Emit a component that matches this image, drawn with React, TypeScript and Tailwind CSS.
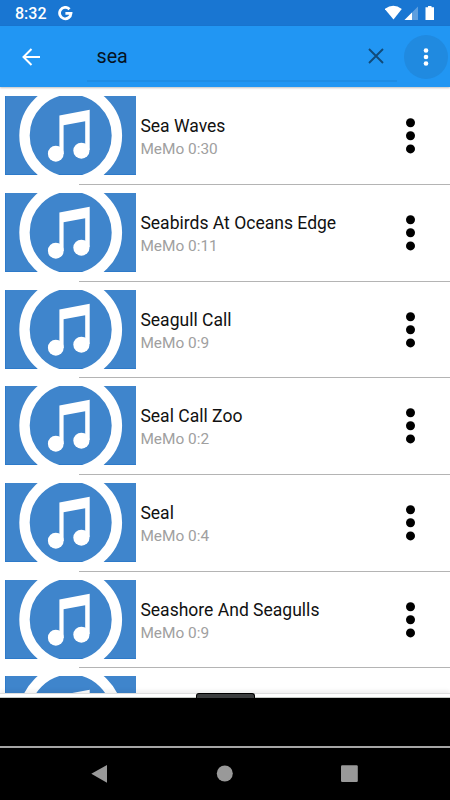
type Track = { title: string; artist: string; length: string };

const TRACKS: Track[] = [
  { title: "Sea Waves", artist: "MeMo", length: "0:30" },
  { title: "Seabirds At Oceans Edge", artist: "MeMo", length: "0:11" },
  { title: "Seagull Call", artist: "MeMo", length: "0:9" },
  { title: "Seal Call Zoo", artist: "MeMo", length: "0:2" },
  { title: "Seal", artist: "MeMo", length: "0:4" },
  { title: "Seashore And Seagulls", artist: "MeMo", length: "0:9" },
];

export default function App() {
  return (
    <div className="flex h-[800px] w-[450px] flex-col overflow-hidden bg-white font-[Roboto,sans-serif]">
      <StatusBar />
      <SearchBar query="sea" />
      <main className="h-[606px] shrink-0 overflow-hidden pt-[1.300px]">
        {TRACKS.map((t) => <TrackRow key={t.title} track={t} />)}
        <div className="pt-[8px] pl-[4.6px]"><Artwork /></div>
      </main>
      <PlayerPanel />
      <NavBar />
    </div>
  );
}

function StatusBar() {
  return (
    <div className="flex h-[26px] shrink-0 items-center bg-[#1976d2] pl-[15px] text-white">
      <span className="w-[43px] pt-[2px] text-[16px] leading-[24px] font-medium">8:32</span>
      <svg width="15" height="15" viewBox="0 0 15 15" fill="none" stroke="white" strokeWidth="2.8">
        <path d="M11.5 3.2A5.7 5.7 0 1 0 13 7.4H7.4" />
      </svg>
      <svg className="ml-auto" width="65" height="26" viewBox="385 0 65 26" fill="white">
        <path d="M384.8 9q8.5-6.6 17 0L393.500 19.400z" />
        <path d="M418 6.500V20h-13.500z" fillOpacity=".3" />
        <path d="M412 12.500V20h-7.500z" />
        <path d="M428 6h3.500v1.200H434V20h-8.500V7.200h2.500z" />
      </svg>
    </div>
  );
}

function SearchBar({ query }: { query: string }) {
  return (
    <header className="relative z-10 flex h-[61px] shrink-0 items-center bg-[#2196f3] shadow-[0_1px_2px_rgba(0,0,0,0.25)]">
      <svg className="ml-[21px]" width="20" height="20" viewBox="0 0 20 20" fill="none" stroke="white" strokeWidth="2">
        <path d="M19 10H2.500M10.500 2L2.500 10l8 8" />
      </svg>
      <div className="ml-[46px] flex h-[56px] w-[310px] items-center self-start border-b-2 border-[#1f8de5] pl-[9.500px]">
        <span className="pt-[8px] text-[19.700px] text-[#06131f]">{query}</span>
        <svg className="mt-[6px] mr-[13px] ml-auto" width="16" height="16" viewBox="0 0 16 16" fill="none" stroke="#114a79" strokeWidth="1.900">
          <path d="M1 1l14 14M15 1L1 15" />
        </svg>
      </div>
      <div className="ml-[7px] flex size-[44px] shrink-0 items-center justify-center rounded-full bg-[#208ae0]">
        <svg width="6" height="20" viewBox="0 0 6 20" fill="white">
          <circle cx="3" cy="3.500" r="2.300" />
          <circle cx="3" cy="10" r="2.300" />
          <circle cx="3" cy="16.500" r="2.300" />
        </svg>
      </div>
    </header>
  );
}

function TrackRow({ track }: { track: Track }) {
  return (
    <div className="flex h-[96.670px] flex-col">
      <div className="flex flex-1 pt-[8px] pl-[4.600px]">
        <Artwork />
        <div className="pt-[19px] pl-[4.500px]">
          <div className="text-[17.550px] leading-[22px] text-[#111]">{track.title}</div>
          <div className="pt-px text-[15.400px] leading-[22px] text-[#a0a0a0]">{track.artist} {track.length}</div>
        </div>
        <svg className="mt-[20px] mr-[34px] ml-auto" width="11" height="40" viewBox="0 0 11 40">
          <circle cx="5.500" cy="6.700" r="4.500" />
          <circle cx="5.500" cy="19.800" r="4.500" />
          <circle cx="5.500" cy="32.900" r="4.500" />
        </svg>
      </div>
      <div className="ml-[79px] h-px shrink-0 bg-[#b4b4b4]" />
    </div>
  );
}

// Cover with a ring around a pair of beamed notes.
function Artwork() {
  return (
    <svg className="shrink-0" width="131.300" height="79" viewBox="0 0 131.300 79">
      <rect width="131.300" height="79" fill="#3f85cc" />
      <path d="M.3 0V78.600H131" fill="none" stroke="#2474c8" strokeWidth=".7" />
      <circle cx="65.700" cy="39.500" r="46.200" fill="none" stroke="white" strokeWidth="10.400" />
      <g fill="white">
        <path d="M54.400 19.400L84.700 13.700V54H80.200V25.200L58.600 29.300V58H54.400z" />
        <ellipse cx="50.800" cy="57.700" rx="7.900" ry="8" />
        <ellipse cx="76.400" cy="54.700" rx="8.100" ry="8" />
      </g>
    </svg>
  );
}

function PlayerPanel() {
  return (
    <div className="flex h-[53px] shrink-0 flex-col">
      <div className="flex h-[5px] justify-center border-t border-b border-t-[#dedede] border-b-[#c4c8c4] bg-white shadow-[0_-2px_4px_rgba(0,0,0,0.08)]">
        <div className="-mt-px h-[5px] w-[59px] rounded-t-[3px] border border-b-0 border-black bg-[#3b3d3e]" />
      </div>
      <div className="flex-1 bg-black" />
    </div>
  );
}

function NavBar() {
  return (
    <nav className="flex h-[54px] shrink-0 items-center border-t-2 border-[#a5a5a5] bg-black">
      <svg width="450" height="52" viewBox="0 748 450 52" fill="#999">
        <path d="M91.300 773.700L107 765v17.800z" />
        <circle cx="224.800" cy="773.500" r="8" />
        <rect x="341" y="765.300" width="16.800" height="16.700" rx="1.200" />
      </svg>
    </nav>
  );
}
